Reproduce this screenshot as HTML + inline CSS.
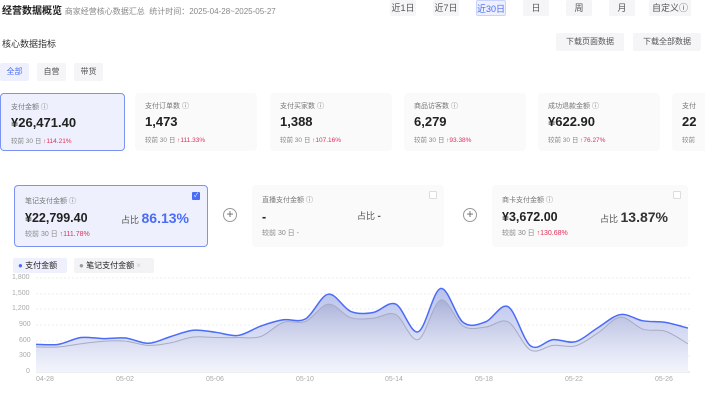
<!DOCTYPE html><html><head><meta charset="utf-8"><style>
*{margin:0;padding:0;box-sizing:border-box}
body{width:705px;height:402px;overflow:hidden;background:#fff;font-family:"Liberation Sans","Noto Sans CJK SC",sans-serif;color:#222;position:relative}
.a{position:absolute}
.btn{position:absolute;top:0;height:16px;background:#f5f5f7;border-radius:2px;font-size:9px;color:#555;text-align:center;line-height:16px}
.card{position:absolute;top:93px;width:122px;height:58px;background:#fafafa;border-radius:4px}
.card .t{position:absolute;left:10px;top:8px;font-size:7px;color:#777}
.card .v{position:absolute;left:10px;top:21px;font-size:13px;font-weight:bold;color:#222}
.card .c{position:absolute;left:10px;top:41px;font-size:6.5px;color:#888}
.r{color:#e0305a}
.sub{position:absolute;top:185px;height:62px;background:#fafafa;border-radius:4px}
.sub .t{position:absolute;left:10px;top:10px;font-size:7px;color:#777}
.sub .v{position:absolute;left:10px;top:25px;font-size:12.5px;font-weight:bold}
.sub .c{position:absolute;left:10px;top:43px;font-size:7px;color:#888}
.sub .p{position:absolute;top:24px;font-size:9px;color:#555}
.sub .p b{font-size:14px}
.cb{position:absolute;right:7px;top:6px;width:8px;height:8px;border:1px solid #ddd;background:#fff;border-radius:1px}
.plus{position:absolute;top:208px;width:14px;height:14px;border:1px solid #999;border-radius:50%;font-size:12px;line-height:11px;text-align:center;color:#666}
.ax{position:absolute;font-size:7px;color:#aaa}
</style></head><body>
<div class="a" style="left:2px;top:2px;font-size:10px;font-weight:bold">经营数据概览 <span style="font-weight:normal;font-size:8px;color:#888">商家经营核心数据汇总 &nbsp;统计时间：2025-04-28~2025-05-27</span></div>
<div class="btn" style="left:390px;width:26px">近1日</div>
<div class="btn" style="left:433px;width:26px">近7日</div>
<div class="btn" style="left:476px;width:30px;background:#eef1fd;color:#4a6cf7;border:1px solid #c9d3fb">近30日</div>
<div class="btn" style="left:523px;width:26px">日</div>
<div class="btn" style="left:566px;width:26px">周</div>
<div class="btn" style="left:609px;width:26px">月</div>
<div class="btn" style="left:649px;width:42px">自定义ⓘ</div>
<div class="a" style="left:2px;top:37px;font-size:9px;color:#333">核心数据指标</div>
<div class="btn" style="left:556px;top:33px;width:68px;height:18px;line-height:18px;font-size:8px">下载页面数据</div>
<div class="btn" style="left:633px;top:33px;width:68px;height:18px;line-height:18px;font-size:8px">下载全部数据</div>
<div class="btn" style="left:0;top:63px;width:29px;height:18px;line-height:18px;font-size:8px;background:#eef1fd;color:#4a6cf7">全部</div>
<div class="btn" style="left:37px;top:63px;width:29px;height:18px;line-height:18px;font-size:8px">自营</div>
<div class="btn" style="left:74px;top:63px;width:29px;height:18px;line-height:18px;font-size:8px">带货</div>
<div class="card" style="left:0;width:125px;background:#eef1fd;border:1.5px solid #7d93f2"><div class="t">支付金额 ⓘ</div><div class="v">¥26,471.40</div><div class="c">较前 30 日 <span class="r">↑114.21%</span></div></div>
<div class="card" style="left:135px"><div class="t">支付订单数 ⓘ</div><div class="v">1,473</div><div class="c">较前 30 日 <span class="r">↑111.33%</span></div></div>
<div class="card" style="left:270px"><div class="t">支付买家数 ⓘ</div><div class="v">1,388</div><div class="c">较前 30 日 <span class="r">↑107.16%</span></div></div>
<div class="card" style="left:404px"><div class="t">商品访客数 ⓘ</div><div class="v">6,279</div><div class="c">较前 30 日 <span class="r">↑93.38%</span></div></div>
<div class="card" style="left:538px"><div class="t">成功退款金额 ⓘ</div><div class="v">¥622.90</div><div class="c">较前 30 日 <span class="r">↑76.27%</span></div></div>
<div class="card" style="left:672px"><div class="t">支付</div><div class="v">22</div><div class="c">较前</div></div>
<div class="sub" style="left:14px;width:194px;background:#eef1fd;border:1.5px solid #7d93f2"><div class="t">笔记支付金额 ⓘ</div><div class="v">¥22,799.40</div><div class="c">较前 30 日 <span class="r">↑111.78%</span></div><div class="p" style="left:106px">占比 <b style="color:#4a6cf7">86.13%</b></div><div class="cb" style="background:#4a6cf7;border-color:#4a6cf7;color:#fff;font-size:6px;line-height:7px;text-align:center">✓</div></div>
<div class="plus" style="left:223px">+</div>
<div class="sub" style="left:252px;width:192px"><div class="t">直播支付金额 ⓘ</div><div class="v">-</div><div class="c">较前 30 日 -</div><div class="p" style="left:105px">占比 <b style="font-size:10px">-</b></div><div class="cb"></div></div>
<div class="plus" style="left:463px">+</div>
<div class="sub" style="left:492px;width:196px"><div class="t">商卡支付金额 ⓘ</div><div class="v">¥3,672.00</div><div class="c">较前 30 日 <span class="r">↑130.68%</span></div><div class="p" style="left:108px">占比 <b style="color:#333">13.87%</b></div><div class="cb"></div></div>
<div class="a" style="left:13px;top:258px;width:54px;height:15px;background:#eef1fd;border-radius:2px;font-size:8px;line-height:15px;padding-left:5px"><span style="color:#4a6cf7">●</span> 支付金额</div>
<div class="a" style="left:74px;top:258px;width:80px;height:15px;background:#f3f3f5;border-radius:2px;font-size:8px;line-height:15px;padding-left:5px"><span style="color:#999">●</span> 笔记支付金额 <span style="color:#ccc">×</span></div>
<div class="ax" style="left:12px;top:274px">1,800</div><div class="ax" style="left:12px;top:290px">1,500</div><div class="ax" style="left:12px;top:305px">1,200</div><div class="ax" style="left:19px;top:321px">900</div><div class="ax" style="left:19px;top:337px">600</div><div class="ax" style="left:19px;top:352px">300</div><div class="ax" style="left:26px;top:368px">0</div>
<div class="ax" style="left:36px;top:376px">04-28</div><div class="ax" style="left:116px;top:376px">05-02</div><div class="ax" style="left:206px;top:376px">05-06</div><div class="ax" style="left:296px;top:376px">05-10</div><div class="ax" style="left:385px;top:376px">05-14</div><div class="ax" style="left:475px;top:376px">05-18</div><div class="ax" style="left:565px;top:376px">05-22</div><div class="ax" style="left:655px;top:376px">05-26</div>
<svg class="a" style="left:0;top:0" width="705" height="402" id="s">
<defs><linearGradient id="g" x1="0" y1="0" x2="0" y2="1"><stop offset="0" stop-color="#b9c2ec"/><stop offset="1" stop-color="#eef0fb"/></linearGradient>
<linearGradient id="h" x1="0" y1="0" x2="0" y2="1"><stop offset="0" stop-color="#9ea6cf" stop-opacity=".7"/><stop offset="1" stop-color="#fff" stop-opacity=".3"/></linearGradient></defs>
<g stroke="#eee" stroke-dasharray="2 2"><line x1="36" x2="690" y1="278" y2="278"/><line x1="36" x2="690" y1="294" y2="294"/><line x1="36" x2="690" y1="309" y2="309"/><line x1="36" x2="690" y1="325" y2="325"/><line x1="36" x2="690" y1="341" y2="341"/><line x1="36" x2="690" y1="356" y2="356"/></g>
<line x1="36" x2="690" y1="372" y2="372" stroke="#ddd"/>
<path id="ba" fill="url(#g)"/><path id="ga" fill="url(#h)"/><path id="gl" fill="none" stroke="#a7abc4" stroke-width="1"/><path id="bl" fill="none" stroke="#4a6cf7" stroke-width="1.5"/>
</svg>
<script>
var B=[530,530,660,640,650,550,680,800,760,700,880,1000,1020,1490,1160,1140,1300,770,1600,950,960,1250,500,620,580,850,1100,980,950,840];
var G=[480,480,540,590,590,510,560,670,660,660,680,950,970,1300,1040,1030,1100,620,1380,880,860,960,420,510,500,750,1050,820,780,540];
function pts(a){return a.map(function(v,i){return [36+i*22.48,372-v*94/1800]})}
function path(p){var d="M"+p[0][0]+","+p[0][1];for(var i=0;i<p.length-1;i++){var p0=p[i-1]||p[i],p1=p[i],p2=p[i+1],p3=p[i+2]||p2;d+=" C"+(p1[0]+(p2[0]-p0[0])/6)+","+(p1[1]+(p2[1]-p0[1])/6)+" "+(p2[0]-(p3[0]-p1[0])/6)+","+(p2[1]-(p3[1]-p1[1])/6)+" "+p2[0]+","+p2[1];}return d}
var b=path(pts(B)),g=path(pts(G));
document.getElementById('bl').setAttribute('d',b);document.getElementById('gl').setAttribute('d',g);
document.getElementById('ba').setAttribute('d',b+" L688,372 L36,372Z");document.getElementById('ga').setAttribute('d',g+" L688,372 L36,372Z");
</script>
</body></html>
